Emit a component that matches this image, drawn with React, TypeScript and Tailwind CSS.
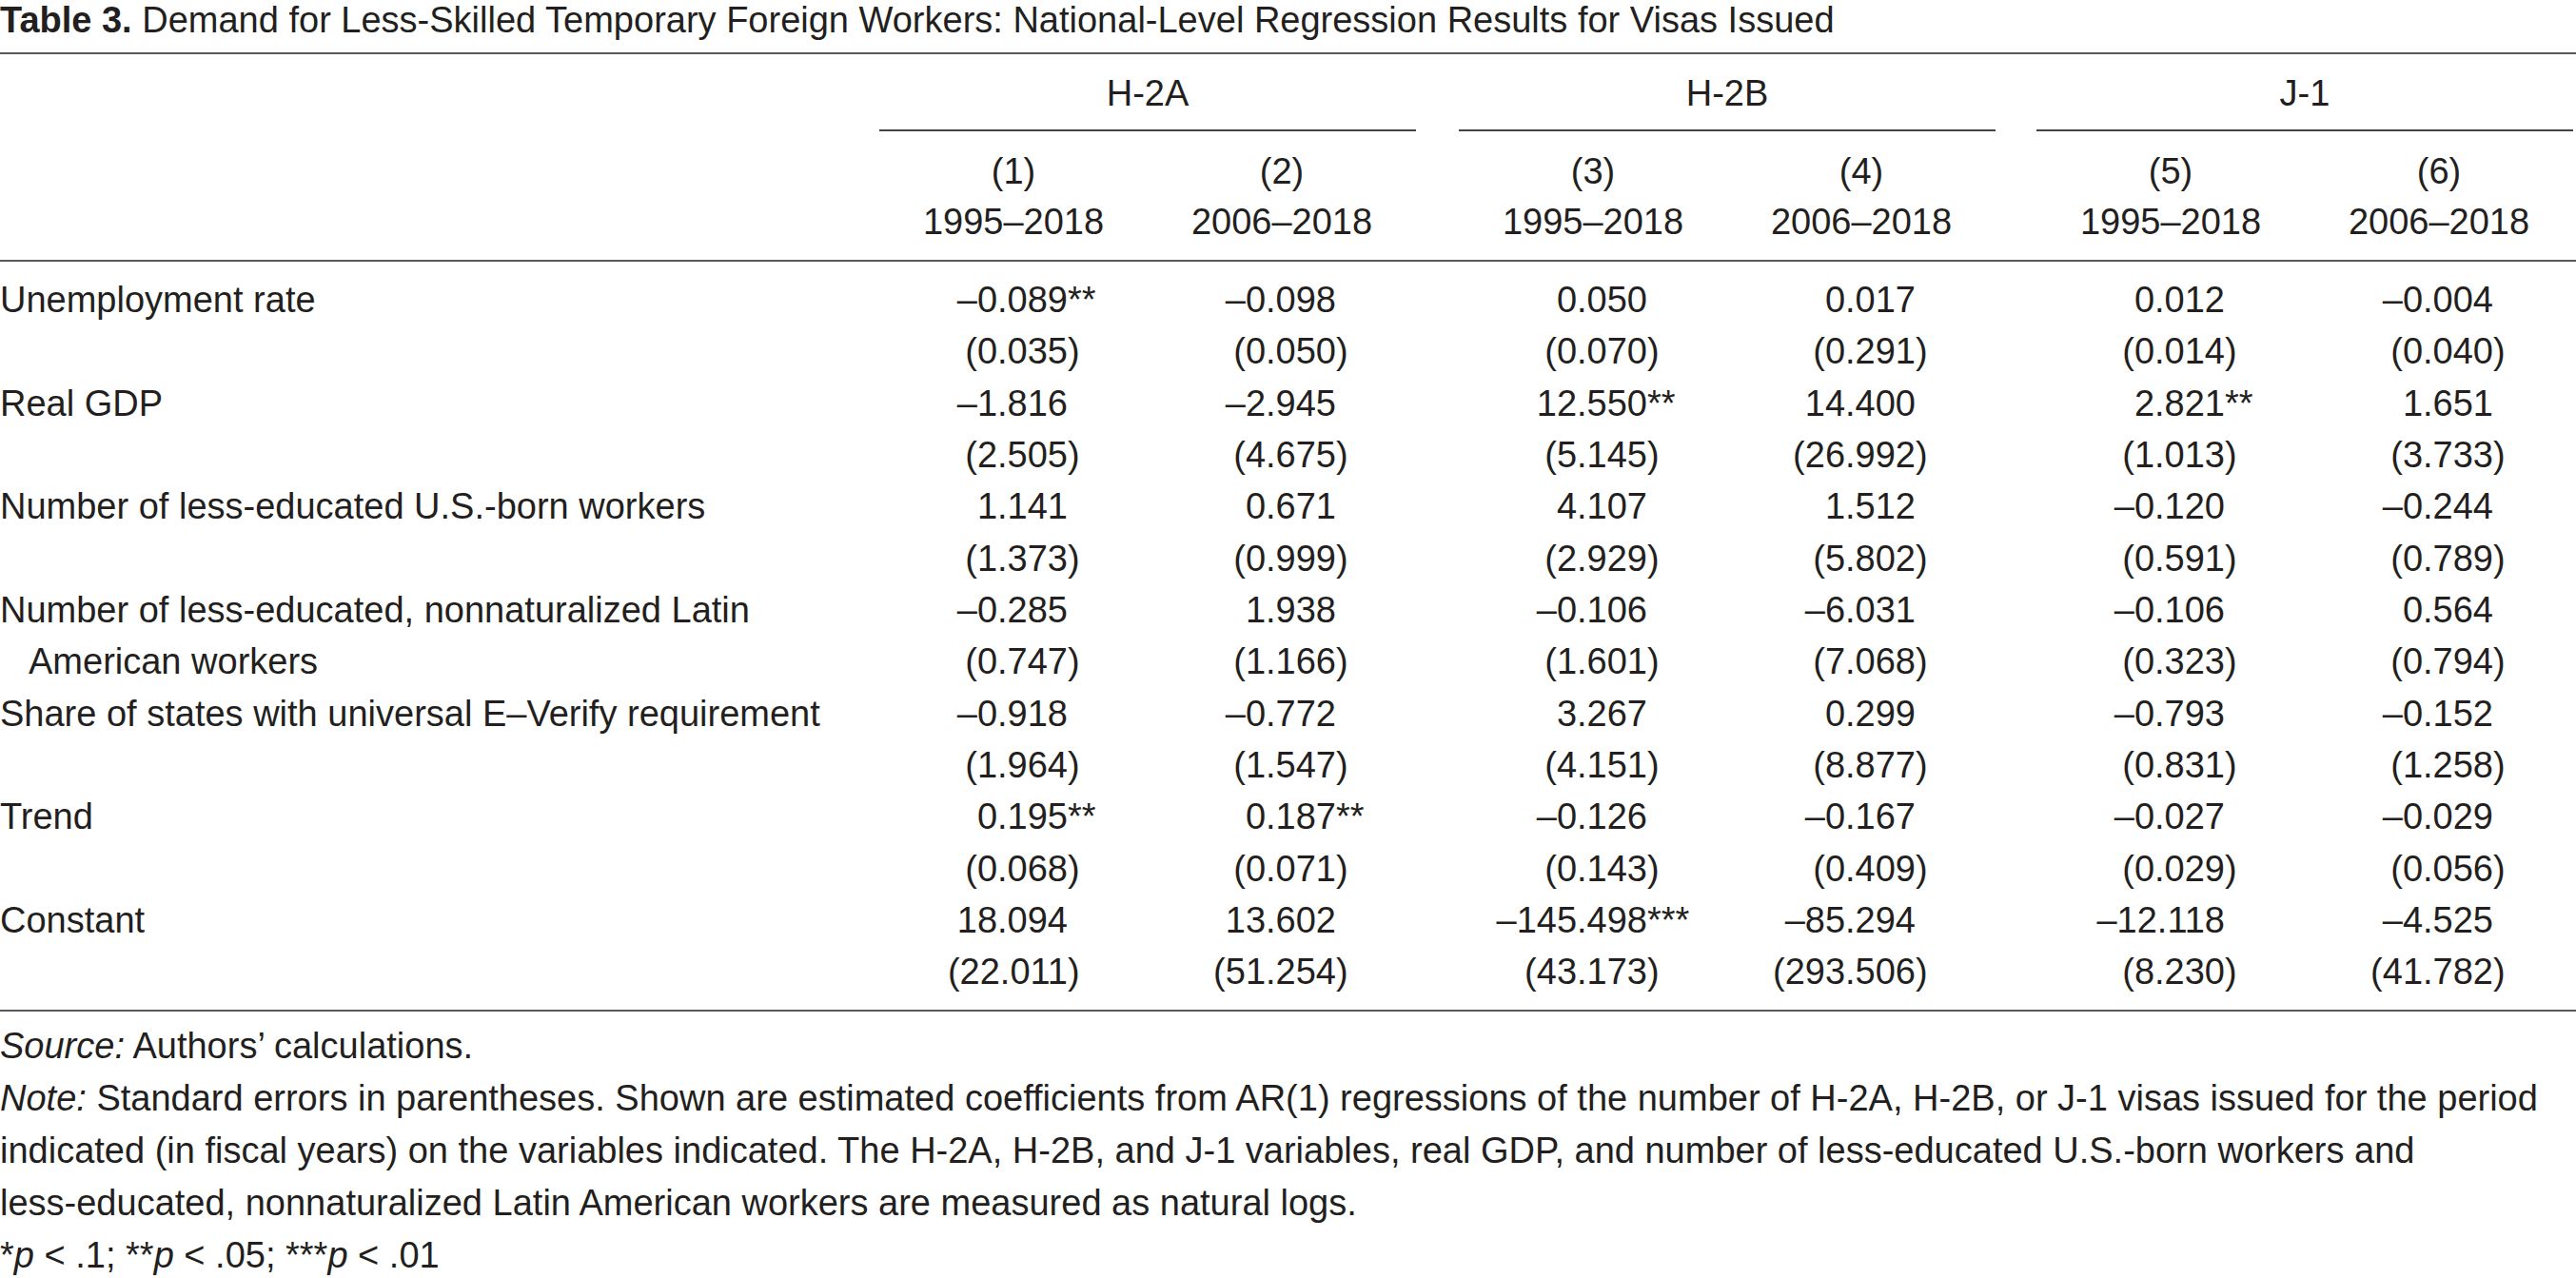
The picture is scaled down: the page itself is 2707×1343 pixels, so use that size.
type Row = { label: string; indent?: boolean; values: string[] };

const gridCols =
  "grid grid-cols-[924px_282px_282px_45px_282px_282px_43px_282px_282px]";

const rows: Row[] = [
  { label: "Unemployment rate", values: ["–0.089**", "–0.098", "0.050", "0.017", "0.012", "–0.004"] },
  { label: "", values: ["(0.035)", "(0.050)", "(0.070)", "(0.291)", "(0.014)", "(0.040)"] },
  { label: "Real GDP", values: ["–1.816", "–2.945", "12.550**", "14.400", "2.821**", "1.651"] },
  { label: "", values: ["(2.505)", "(4.675)", "(5.145)", "(26.992)", "(1.013)", "(3.733)"] },
  {
    label: "Number of less-educated U.S.-born workers",
    values: ["1.141", "0.671", "4.107", "1.512", "–0.120", "–0.244"],
  },
  { label: "", values: ["(1.373)", "(0.999)", "(2.929)", "(5.802)", "(0.591)", "(0.789)"] },
  {
    label: "Number of less-educated, nonnaturalized Latin",
    values: ["–0.285", "1.938", "–0.106", "–6.031", "–0.106", "0.564"],
  },
  {
    label: "American workers",
    indent: true,
    values: ["(0.747)", "(1.166)", "(1.601)", "(7.068)", "(0.323)", "(0.794)"],
  },
  {
    label: "Share of states with universal E–Verify requirement",
    values: ["–0.918", "–0.772", "3.267", "0.299", "–0.793", "–0.152"],
  },
  { label: "", values: ["(1.964)", "(1.547)", "(4.151)", "(8.877)", "(0.831)", "(1.258)"] },
  { label: "Trend", values: ["0.195**", "0.187**", "–0.126", "–0.167", "–0.027", "–0.029"] },
  { label: "", values: ["(0.068)", "(0.071)", "(0.143)", "(0.409)", "(0.029)", "(0.056)"] },
  { label: "Constant", values: ["18.094", "13.602", "–145.498***", "–85.294", "–12.118", "–4.525"] },
  { label: "", values: ["(22.011)", "(51.254)", "(43.173)", "(293.506)", "(8.230)", "(41.782)"] },
];

const columns = [
  { n: "(1)", years: "1995–2018" },
  { n: "(2)", years: "2006–2018" },
  { n: "(3)", years: "1995–2018" },
  { n: "(4)", years: "2006–2018" },
  { n: "(5)", years: "1995–2018" },
  { n: "(6)", years: "2006–2018" },
];

// split "–0.089**" into "–0.089" + "**", "(0.035)" into "(0.035" + ")"
function splitValue(v: string) {
  const m = v.match(/^(.*?)([*)]*)$/);
  return m ? [m[1], m[2]] : [v, ""];
}

function NumCell({ value }: { value: string }) {
  const [main, suffix] = splitValue(value);
  return (
    <div className="grid grid-cols-[198px_1fr]">
      <span className="text-right">{main}</span>
      <span>{suffix}</span>
    </div>
  );
}

function withGaps<T>(items: T[], render: (item: T, i: number) => React.ReactNode) {
  const out: React.ReactNode[] = [];
  items.forEach((item, i) => {
    if (i === 2 || i === 4) out.push(<div key={`gap-${i}`} />);
    out.push(render(item, i));
  });
  return out;
}

export default function App() {
  return (
    <div className="min-h-screen bg-white font-['Liberation_Sans',Arial,sans-serif] text-[38px] text-[#231f20]">
      <div className="leading-[42px] whitespace-nowrap">
        <span className="font-bold">Table 3.</span> Demand for Less-Skilled Temporary Foreign Workers:
        National-Level Regression Results for Visas Issued
      </div>

      <div className="mt-[13px] h-[2px] bg-[#58595b]" />

      {/* header */}
      <div className={`${gridCols} pt-[19px] leading-[44px]`}>
        <div />
        {["H-2A", "H-2B", "J-1"].map((g, i) => (
          <>
            {i > 0 && <div key={`sg-${g}`} />}
            <div key={g} className="col-span-2 flex flex-col items-center">
              <span>{g}</span>
              <div className="mt-[16px] h-[2px] w-full bg-[#444]" />
            </div>
          </>
        ))}
      </div>
      <div className={`${gridCols} pt-[16px] leading-[53px]`}>
        <div />
        {withGaps(columns, (c) => (
          <div key={c.n} className="flex flex-col items-center">
            <span>{c.n}</span>
            <span>{c.years}</span>
          </div>
        ))}
      </div>

      <div className="mt-[13px] h-[2px] bg-[#58595b]" />

      {/* body */}
      <div className="pt-[13px] pb-[12px] leading-[54.33px]">
        {rows.map((r, ri) => (
          <div key={ri} className={gridCols}>
            <div className={r.indent ? "pl-[30px] whitespace-nowrap" : "whitespace-nowrap"}>{r.label}</div>
            {withGaps(r.values, (v, i) => (
              <NumCell key={i} value={v} />
            ))}
          </div>
        ))}
      </div>

      <div className="h-[2px] bg-[#58595b]" />

      {/* notes */}
      <div className="pt-[9px] leading-[55.2px]">
        <p>
          <i>Source:</i> Authors’ calculations.
        </p>
        <p className="whitespace-nowrap">
          <i>Note:</i> Standard errors in parentheses. Shown are estimated coefficients from AR(1) regressions of the
          number of H-2A, H-2B, or J-1 visas issued for the period
          <br />
          indicated (in fiscal years) on the variables indicated. The H-2A, H-2B, and J-1 variables, real GDP, and
          number of less-educated U.S.-born workers and
          <br />
          less-educated, nonnaturalized Latin American workers are measured as natural logs.
        </p>
        <p>
          *<i>p</i> &lt; .1; **<i>p</i> &lt; .05; ***<i>p</i> &lt; .01
        </p>
      </div>
    </div>
  );
}
